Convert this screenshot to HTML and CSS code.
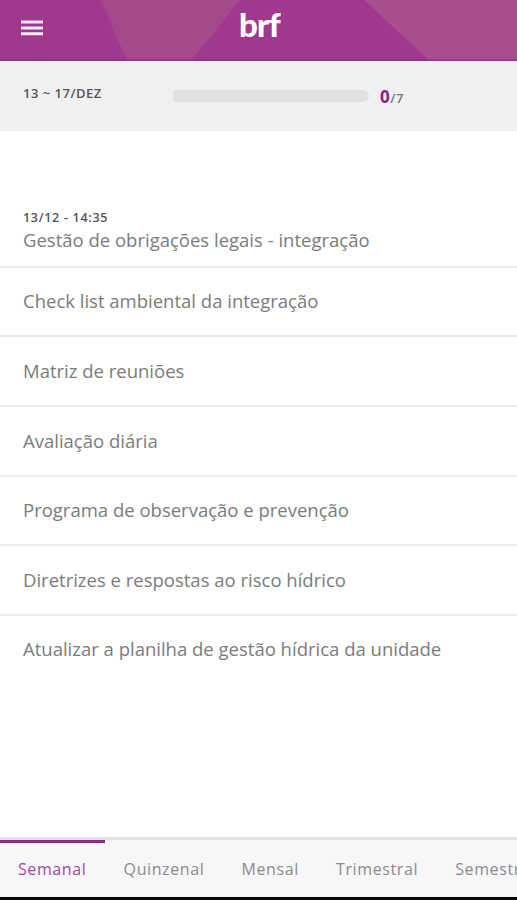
FILE: index.html
```html
<!DOCTYPE html>
<html lang="pt-BR">
<head>
    <meta charset="UTF-8">
    <title>brf</title>
    <link rel="stylesheet" href="styles.css">
</head>
<body>
<div class="app">
    <header class="header">
        <svg class="header-bg" viewBox="0 0 517 61" preserveAspectRatio="none">
            <path d="M101 0H240L191 61H127Z" fill="#a5488c"/>
            <path d="M364 0H517V61H430Z" fill="#a84e8f"/>
            <path d="M0 60H517" stroke="#962f86" stroke-width="2" opacity=".7"/>
        </svg>
        <button class="menu">
            <svg width="22" height="16" viewBox="0 0 22 16">
                <path d="M0 1.9H22M0 7.9H22M0 13.8H22" stroke="#f8e8f6" stroke-width="3"/>
            </svg>
        </button>
        <div class="logo">brf</div>
    </header>
    <div class="period">
        <span class="period-date">13 ~ 17/DEZ</span>
        <div class="progress"></div>
        <span class="count"><b>0</b>/7</span>
    </div>
    <ul class="list">
        <li class="first"><small>13/12 - 14:35</small><span>Gestão de obrigações legais - integração</span></li>
        <li>Check list ambiental da integração</li>
        <li>Matriz de reuniões</li>
        <li>Avaliação diária</li>
        <li>Programa de observação e prevenção</li>
        <li>Diretrizes e respostas ao risco hídrico</li>
        <li>Atualizar a planilha de gestão hídrica da unidade</li>
    </ul>
    <nav class="tabs">
        <a class="active">Semanal</a>
        <a>Quinzenal</a>
        <a>Mensal</a>
        <a>Trimestral</a>
        <a>Semestral</a>
    </nav>
</div>
</body>
</html>
```
FILE: styles.css
```css
*{
    margin:0;
    padding:0;
    box-sizing:border-box;
}
body{
    background:#fff;
    font-family:"Open Sans","Noto Sans",sans-serif;
    overflow:hidden;
}
ul{
    list-style:none;
}
.app{
    display:flex;
    flex-direction:column;
    width:517px;
    height:900px;
    border-bottom:3px solid #08090b;
    overflow:hidden;
}
.header{
    position:relative;
    display:flex;
    flex:none;
    height:61px;
    background:#a0398d;
}
.header-bg{
    position:absolute;
    left:0;
    top:0;
    width:517px;
    height:61px;
}
.menu{
    position:relative;
    width:66px;
    height:56px;
    padding-left:21px;
    border:0;
    background:none;
    text-align:left;
}
.menu svg{
    display:block;
}
.logo{
    position:relative;
    width:387px;
    padding-top:4px;
    text-align:center;
    font:900 33px/40px Lato,sans-serif;
    letter-spacing:-.8px;
    color:#fff;
}
.period{
    display:flex;
    flex:none;
    align-items:center;
    height:70px;
    padding-left:23px;
    background:#f0f0f0;
}
.period-date{
    width:150px;
    padding-bottom:6px;
    font-size:13px;
    font-weight:600;
    letter-spacing:.5px;
    color:#555;
}
.progress{
    width:196px;
    height:12px;
    border-radius:3px 6px 6px 3px;
    background:#e1e1e1;
}
.count{
    margin-left:11px;
    font-size:13px;
    font-weight:600;
    letter-spacing:.6px;
    color:#777;
}
.count b{
    font-size:17px;
    font-weight:700;
    color:#8f2385;
}
.list{
    flex:1;
    padding-top:65.5px;
    font-size:18.5px;
    color:#7c7c7c;
}
.list li{
    display:flex;
    align-items:center;
    height:69.7px;
    padding-left:23px;
    padding-bottom:1px;
    border-bottom:2px solid #ededed;
    white-space:nowrap;
}
.list li:last-child{
    border-bottom:0;
    padding-bottom:4px;
}
.list .first{
    flex-direction:column;
    align-items:flex-start;
    justify-content:flex-end;
    height:71px;
    padding-bottom:14px;
}
.list small{
    font-size:12.5px;
    font-weight:600;
    line-height:20px;
    letter-spacing:.7px;
    color:#555;
}
.list span{
    line-height:24px;
}
.tabs{
    display:flex;
    flex:none;
    height:60px;
    border-top:3px solid #e2e2e3;
    background:#f7f7f9;
    font-size:16px;
    letter-spacing:.6px;
    color:#8b8b8d;
}
.tabs a{
    flex:none;
    padding:17px 18.6px 0;
    line-height:24px;
}
.tabs .active{
    width:105px;
    padding-left:18px;
    padding-right:0;
    border-top:3px solid #8a2c7f;
    padding-top:14px;
    color:#a3489a;
}
```
